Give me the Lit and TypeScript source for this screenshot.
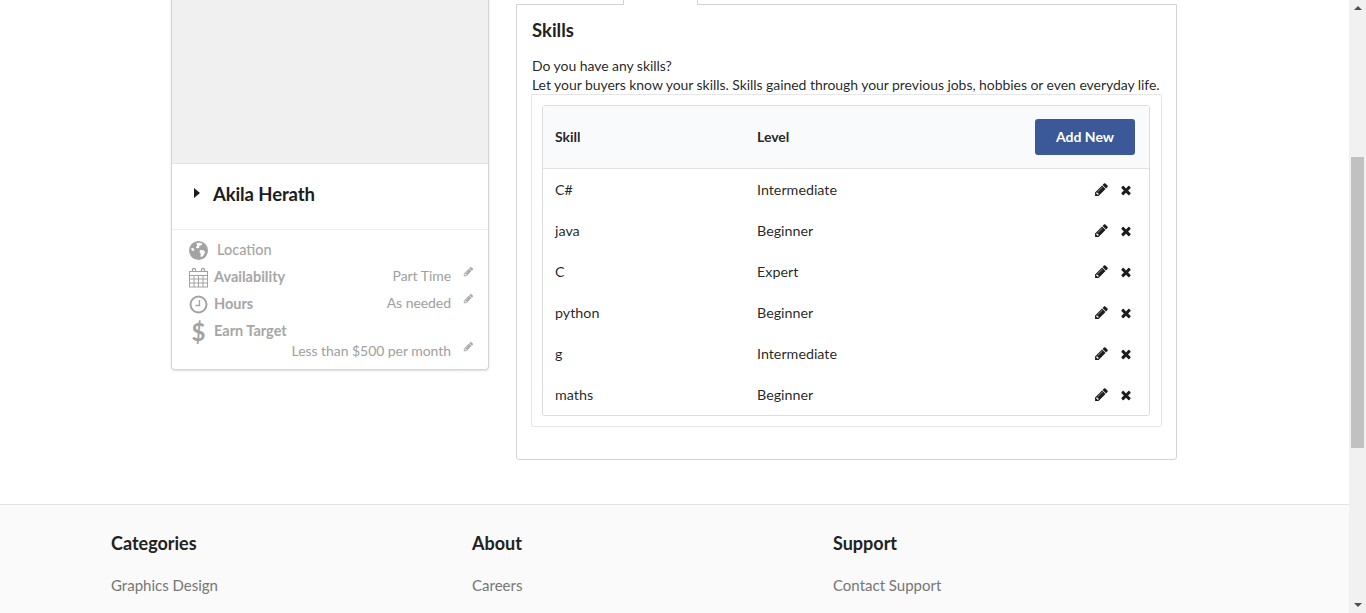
import { LitElement, html, css, svg } from 'lit';
import { customElement } from 'lit/decorators.js';

const pencil = (size: number) => html`<svg width=${size} height=${size} viewBox="0 0 1792 1792" fill="currentColor"><path d="M491 1536l91-91-235-235-91 91v107h128v128h107zm523-928q0-22-22-22-10 0-17 7l-542 542q-7 7-7 17 0 22 22 22 10 0 17-7l542-542q7-7 7-17zm-54-192l416 416-832 832h-416v-416zm683 96q0 53-37 90l-166 166-416-416 166-165q36-38 90-38 53 0 91 38l235 234q37 39 37 91z"/></svg>`;
const times = html`<svg width="14" height="14" viewBox="0 0 1792 1792" fill="currentColor"><path d="M1490 1322q0 40-28 68l-136 136q-28 28-68 28t-68-28l-294-294-294 294q-28 28-68 28t-68-28l-136-136q-28-28-28-68t28-68l294-294-294-294q-28-28-28-68t28-68l136-136q28-28 68-28t68 28l294 294 294-294q28-28 68-28t68 28l136 136q28 28 28 68t-28 68l-294 294 294 294q28 28 28 68z"/></svg>`;

const globe = svg`<circle cx="10" cy="10" r="9" fill="#a3a3a3"/><path d="M8 3.200c2-.9 4.300-.5 5.600.4l-.8 1.500-1.800.4-.4 1.800-1.900.7-1.300-1.200L8.900 5.200zM11.500 9.500l3.300.2 1.500 1.700-1.200 3-2 1.900-1.300-.5.400-2.400-1.300-2zM3.200 7.500l1.700.2 1.200 1.600-.7 1.200L3.500 10z" fill="#fff"/>`;
const calendar = svg`<g fill="none" stroke="#a3a3a3" stroke-width="1"><rect x="1.500" y="4.500" width="18" height="15.500"/><path d="M1.500 8.500h18M1.500 12h18M1.500 16h18M6 8.500V20M10.500 8.500V20M15 8.500V20"/><path d="M4.500 5V2.800a1.500 1.500 0 0 1 3 0V5M13.500 5V2.800a1.500 1.500 0 0 1 3 0V5" stroke-width="1.300"/></g>`;
const clock = svg`<g fill="none" stroke="#a3a3a3"><circle cx="10" cy="10.500" r="8" stroke-width="2"/><path d="M11 6v5.500H7" stroke-width="1.400"/></g>`;

const skills = [
  ['C#', 'Intermediate'],
  ['java', 'Beginner'],
  ['C', 'Expert'],
  ['python', 'Beginner'],
  ['g', 'Intermediate'],
  ['maths', 'Beginner'],
];

const footerCols = [
  ['Categories', 'Graphics Design'],
  ['About', 'Careers'],
  ['Support', 'Contact Support'],
];

@customElement('app-root')
export class AppRoot extends LitElement {
  static styles = css`
    :host {
      display: flex;
      height: 613px;
      overflow: hidden;
      font-family: Lato, 'Open Sans', sans-serif;
      font-size: 14px;
      color: rgba(0, 0, 0, 0.87);
      background: #fff;
    }
    .page {
      width: 1349px;
      flex: none;
    }
    .content {
      height: 504px;
      padding-left: 171px;
      display: flex;
      gap: 27px;
      box-sizing: border-box;
    }
    .profile {
      width: 318px;
      height: 370px;
      box-sizing: border-box;
      border: 1px solid #d4d4d5;
      border-top: 0;
      border-radius: 0 0 4px 4px;
      box-shadow: 0 1px 2px rgba(34, 36, 38, 0.15);
    }
    .photo {
      height: 163px;
      background: #f0f0f0;
      border-bottom: 1px solid #e4e4e4;
    }
    .name {
      height: 59px;
      padding: 0 0 6px 22px;
      display: flex;
      align-items: center;
      gap: 13px;
      font-size: 18.500px;
      font-weight: 700;
      letter-spacing: -0.1px;
      border-bottom: 1px solid #eeeeee;
      color: #1b1c1d;
    }
    .caret {
      width: 0;
      height: 0;
      border-left: 6px solid #1b1c1d;
      border-top: 5px solid transparent;
      border-bottom: 5px solid transparent;
      margin-top: -2px;
    }
    .facts {
      padding: 6px 14px 0 16px;
      color: #a0a0a0;
      font-size: 14.500px;
    }
    .fact {
      height: 27px;
      display: flex;
      align-items: center;
      gap: 5px;
    }
    .fact svg.ic {
      width: 21px;
      height: 21px;
      flex: none;
      margin-top: 2px;
    }
    .fact .label {
      font-weight: 700;
      color: #a6a6a6;
    }
    .fact.first .label {
      margin-left: 3px;
      font-weight: 500;
    }
    .dollar {
      width: 21px;
      flex: none;
      text-align: center;
      font-size: 24px;
      font-weight: 700;
      line-height: 25px;
      margin-top: 2px;
      color: #a3a3a3;
    }
    .value {
      margin-left: auto;
      margin-top: -2px;
      display: flex;
      align-items: center;
      gap: 12px;
      font-size: 14px;
      letter-spacing: -0.05px;
    }
    .value svg {
      color: #ababab;
      margin-top: -9px;
    }
    .own {
      height: 13px;
      margin-top: 0;
      justify-content: flex-end;
    }
    .right {
      width: 661px;
    }
    .tabs {
      height: 4px;
      display: flex;
    }
    .tab {
      width: 73px;
      height: 5px;
      margin-left: 107px;
      border: solid #d4d4d5;
      border-width: 0 1px;
      background: #fff;
      position: relative;
    }
    .panel {
      height: 456px;
      box-sizing: border-box;
      border: 1px solid #d4d4d5;
      border-radius: 0 0 3px 3px;
      padding: 0 14px 0 15px;
    }
    h2 {
      margin: 13px 0 0;
      font-size: 18.500px;
      line-height: 24px;
      font-weight: 700;
      color: #222;
    }
    .intro {
      margin: 14px 0 0;
      font-size: 14px;
      letter-spacing: -0.055px;
      line-height: 19px;
      white-space: nowrap;
    }
    .segment {
      width: 631px;
      margin-left: -1px;
      box-sizing: border-box;
      border: 1px solid #e6e6e6;
      border-radius: 2px;
      padding: 10px 11px 10px 10px;
    }
    .table {
      border: 1px solid #dcdcdd;
      border-radius: 3px;
    }
    .head {
      height: 62px;
      display: flex;
      align-items: center;
      background: #f9fafb;
      border-bottom: 1px solid #e2e2e3;
      padding: 0 14px 0 12px;
      font-weight: 700;
    }
    .head span {
      margin-top: -2px;
    }
    .row {
      height: 41px;
      display: flex;
      align-items: center;
      padding: 0 16px 0 12px;
      font-size: 14.300px;
    }
    .cell-skill {
      width: 202px;
    }
    .cell-level {
      flex: 1;
    }
    button {
      width: 100px;
      height: 36px;
      border: 0;
      border-radius: 3px;
      background: #3b5998;
      color: #fff;
      font: 700 14px Lato, sans-serif;
      padding: 0 0 2px;
    }
    .actions {
      display: flex;
      align-items: center;
      gap: 10px;
      color: #1b1c1d;
    }
    footer {
      height: 109px;
      box-sizing: border-box;
      background: #fafafa;
      border-top: 1px solid #e3e3e3;
      padding: 25px 0 0 111px;
      display: flex;
    }
    .col {
      width: 361px;
    }
    .col h4 {
      margin: 0;
      font-size: 18px;
      line-height: 26px;
      font-weight: 700;
      color: #222;
    }
    .col a {
      display: block;
      margin-top: 19px;
      font-size: 15px;
      line-height: 20px;
      color: #767676;
    }
    .scrollbar {
      width: 17px;
      flex: none;
      background: #f1f1f1;
      display: flex;
      flex-direction: column;
      align-items: center;
    }
    .arrow {
      width: 0;
      height: 0;
      border-left: 4px solid transparent;
      border-right: 4px solid transparent;
    }
    .arrow.up {
      margin-top: 6px;
      border-bottom: 4px solid #505050;
    }
    .thumb {
      width: 13px;
      height: 291px;
      margin-top: 147px;
      background: #c1c1c1;
    }
    .arrow.down {
      margin-top: auto;
      margin-bottom: 6px;
      border-top: 4px solid #505050;
    }
  `;

  renderFact(icon: unknown, label: string, value?: string, first = false) {
    return html`<div class="fact ${first ? 'first' : ''}">
      ${icon}
      <span class="label">${label}</span>
      ${value ? html`<span class="value">${value} ${pencil(11)}</span>` : ''}
    </div>`;
  }

  render() {
    return html`
      <div class="page">
        <div class="content">
          <div class="profile">
            <div class="photo"></div>
            <div class="name"><span class="caret"></span>Akila Herath</div>
            <div class="facts">
              ${this.renderFact(html`<svg class="ic" viewBox="0 0 20 20">${globe}</svg>`, 'Location', undefined, true)}
              ${this.renderFact(html`<svg class="ic" viewBox="0 0 21 21">${calendar}</svg>`, 'Availability', 'Part Time')}
              ${this.renderFact(html`<svg class="ic" viewBox="0 0 20 21">${clock}</svg>`, 'Hours', 'As needed')}
              ${this.renderFact(html`<span class="dollar">$</span>`, 'Earn Target')}
              <div class="own value"><span>Less than $500 per month</span>${pencil(11)}</div>
            </div>
          </div>
          <div class="right">
            <div class="tabs"><div class="tab"></div></div>
            <div class="panel">
              <h2>Skills</h2>
              <p class="intro">
                Do you have any skills?<br />
                Let your buyers know your skills. Skills gained through your previous jobs, hobbies or even everyday life.
              </p>
              <div class="segment">
                <div class="table">
                  <div class="head">
                    <span class="cell-skill">Skill</span>
                    <span class="cell-level">Level</span>
                    <button>Add New</button>
                  </div>
                  ${skills.map(
                    ([skill, level]) => html`<div class="row">
                      <span class="cell-skill">${skill}</span>
                      <span class="cell-level">${level}</span>
                      <span class="actions">${pencil(15)}${times}</span>
                    </div>`
                  )}
                </div>
              </div>
            </div>
          </div>
        </div>
        <footer>
          ${footerCols.map(
            ([title, link]) => html`<div class="col"><h4>${title}</h4><a>${link}</a></div>`
          )}
        </footer>
      </div>
      <div class="scrollbar">
        <span class="arrow up"></span>
        <div class="thumb"></div>
        <span class="arrow down"></span>
      </div>
    `;
  }
}
